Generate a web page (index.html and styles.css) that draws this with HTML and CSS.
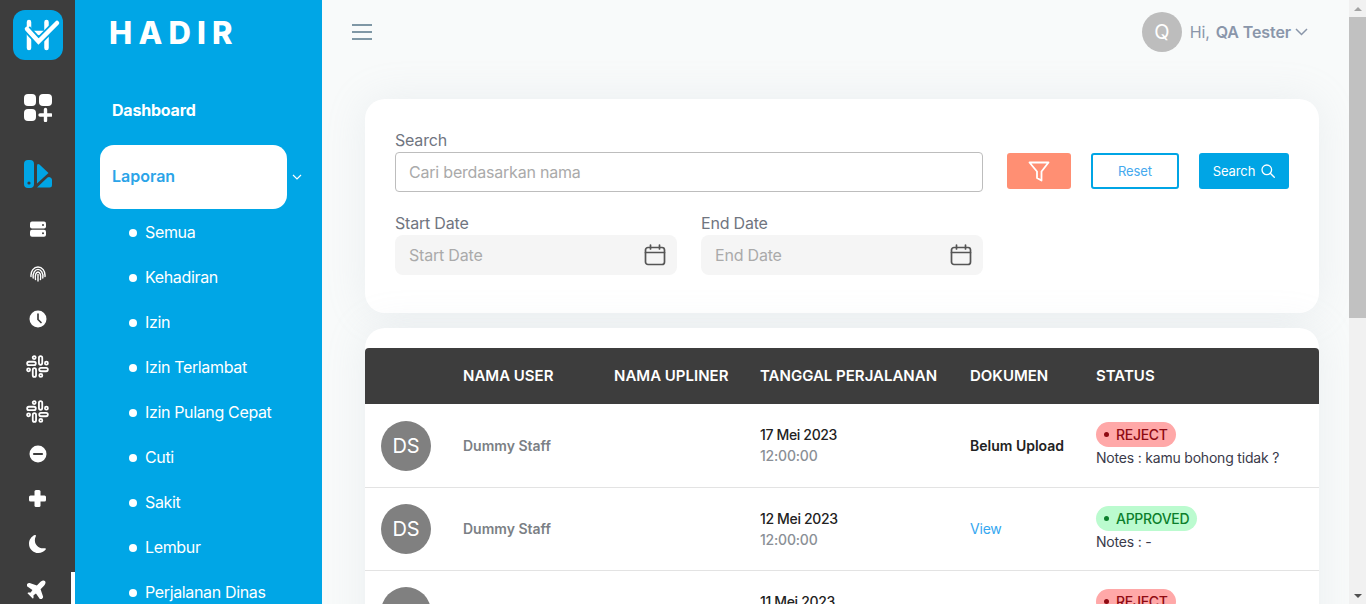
FILE: index.html
```html
<!DOCTYPE html>
<html lang="id">
<head>
    <meta charset="UTF-8">
    <meta name="viewport" content="width=device-width, initial-scale=1.0">
    <title>Hadir - Laporan Perjalanan Dinas</title>
    <link rel="stylesheet" href="styles.css">
</head>
<body>
    <svg class="defs" width="0" height="0">
        <symbol id="slack" viewBox="0 0 16 16">
            <g fill="none" stroke="#fff" stroke-width="1.250">
                <rect x="0.800" y="4.700" width="6" height="2.300" rx="1.150"/>
                <circle cx="5.700" cy="1.800" r="1.050"/>
                <rect x="9" y="0.800" width="2.300" height="6" rx="1.150"/>
                <circle cx="14.200" cy="5.700" r="1.050"/>
                <rect x="9.200" y="9" width="6" height="2.300" rx="1.150"/>
                <circle cx="10.300" cy="14.200" r="1.050"/>
                <rect x="4.700" y="9.200" width="2.300" height="6" rx="1.150"/>
                <circle cx="1.800" cy="10.300" r="1.050"/>
            </g>
        </symbol>
        <symbol id="calendar" viewBox="0 0 22 22">
            <g fill="none" stroke="#555" stroke-width="1.7" stroke-linecap="round">
                <rect x="1.500" y="3.500" width="19" height="17" rx="2.500"/>
                <path d="M1.500 8.500h19M6.500 1v4M15.500 1v4"/>
            </g>
        </symbol>
    </svg>

    <nav class="rail">
        <div class="rail-logo">
            <svg width="50" height="50" viewBox="0 0 50 50">
                <path d="M16 12v26M33.500 12v26M16 23h17.500" stroke="#fff" stroke-width="4.500" stroke-linecap="round" fill="none"/>
                <path d="M14 19l11.500 12.500L44 13" stroke="#00a5e5" stroke-width="8" fill="none"/>
                <path d="M14 19l11.500 12.500L44 13" stroke="#fff" stroke-width="4.500" stroke-linecap="round" fill="none"/>
            </svg>
        </div>
        <div class="rail-apps">
            <svg width="28" height="28" viewBox="0 0 28 28" fill="#fff">
                <rect x="0" y="0" width="12" height="12" rx="4"/>
                <rect x="15" y="0" width="13" height="12" rx="4"/>
                <rect x="0" y="15" width="12" height="12" rx="4"/>
                <path d="M21.500 15.500v11M16 21h11" stroke="#fff" stroke-width="3.400" stroke-linecap="round"/>
            </svg>
        </div>
        <div class="rail-brand">
            <svg width="28" height="28" viewBox="0 0 28 28">
                <rect x="0" y="0" width="10" height="28" rx="4" fill="#00a5e5"/>
                <circle cx="5" cy="23" r="1.600" fill="#3d3d3d"/>
                <path d="M13 6q0-3 2.500-1.500L24.500 13 13 23.500z" fill="#00a5e5"/>
                <path d="M13 27.500L23.500 17.500q1.500-1 3 0l.5.5q1 .7 1 2V25q0 2.500-2.500 2.500z" fill="#00a5e5"/>
            </svg>
        </div>
        <div class="rail-item">
            <svg width="16" height="16" viewBox="0 0 16 16" fill="#fff">
                <rect x="0" y="0.500" width="16" height="7" rx="2"/>
                <rect x="0" y="8.800" width="16" height="7" rx="2"/>
                <circle cx="13" cy="4" r="1" fill="#3d3d3d"/>
                <circle cx="13" cy="12.300" r="1" fill="#3d3d3d"/>
            </svg>
        </div>
        <div class="rail-item">
            <svg width="16" height="16" viewBox="0 0 16 16" fill="none" stroke="#fff" stroke-width="1.400" stroke-linecap="round">
                <path d="M1 10.500C.5 5 4 1 8 1s7.500 4 7 9.500"/>
                <path d="M3.200 12C2.500 7 5 3.400 8 3.400s5.500 3.600 4.800 8.600"/>
                <path d="M5.500 13.500C4.800 9 6 6 8 6s3.200 3 2.500 7.500"/>
                <path d="M8 8.500V15"/>
            </svg>
        </div>
        <div class="rail-item">
            <svg width="18" height="18" viewBox="0 0 18 18">
                <circle cx="9" cy="9" r="8.500" fill="#fff"/>
                <path d="M9 4v5.500l3 3" stroke="#3d3d3d" stroke-width="1.700" fill="none" stroke-linecap="round"/>
            </svg>
        </div>
        <div class="rail-item rail-item-low">
            <svg width="23" height="23"><use href="#slack"/></svg>
        </div>
        <div class="rail-item rail-item-low">
            <svg width="23" height="23"><use href="#slack"/></svg>
        </div>
        <div class="rail-item">
            <svg width="18" height="18" viewBox="0 0 18 18">
                <circle cx="9" cy="9" r="8.500" fill="#fff"/>
                <path d="M5 9h8" stroke="#3d3d3d" stroke-width="2.200" stroke-linecap="round"/>
            </svg>
        </div>
        <div class="rail-item">
            <svg width="17" height="17" viewBox="0 0 17 17" fill="#fff">
                <rect x="5.500" y="0" width="6" height="17" rx="1.500"/>
                <rect x="0" y="5.500" width="17" height="6" rx="1.500"/>
            </svg>
        </div>
        <div class="rail-item">
            <svg width="18" height="18" viewBox="0 0 16 16" fill="#fff">
                <path d="M6 .278a.768.768 0 0 1 .08.858 7.208 7.208 0 0 0-.878 3.460c0 4.021 3.278 7.277 7.318 7.277.527 0 1.040-.055 1.533-.16a.787.787 0 0 1 .81.316.733.733 0 0 1-.031.893A8.349 8.349 0 0 1 8.344 16C3.734 16 0 12.286 0 7.710 0 4.266 2.114 1.312 5.124.06A.752.752 0 0 1 6 .278z"/>
            </svg>
        </div>
        <div class="rail-item rail-item-active">
            <svg width="21" height="21" viewBox="0 0 16 16" fill="#fff">
                <path transform="rotate(45 8 8)" d="M6.428 1.151C6.708.591 7.213 0 8 0s1.292.592 1.572 1.151C9.861 1.730 10 2.431 10 3v3.691l5.170 2.585a1.500 1.500 0 0 1 .83 1.342V12a.5.5 0 0 1-.582.493l-5.507-.918-.375 2.253 1.318 1.318A.5.5 0 0 1 10.500 16h-5a.5.5 0 0 1-.354-.854l1.319-1.318-.376-2.253-5.507.918A.5.5 0 0 1 0 12v-1.382a1.500 1.500 0 0 1 .83-1.342L6 6.691V3c0-.568.14-1.271.428-1.849Z"/>
            </svg>
        </div>
    </nav>

    <aside class="sidebar">
        <div class="brand">HADIR</div>
        <a class="menu-link">Dashboard</a>
        <div class="menu-group">
            <a class="menu-pill">Laporan</a>
            <svg class="menu-chevron" width="10" height="6" viewBox="0 0 10 6">
                <path d="M1 1l4 4 4-4" fill="none" stroke="#fff" stroke-width="1.200"/>
            </svg>
        </div>
        <ul class="submenu">
            <li>Semua</li>
            <li>Kehadiran</li>
            <li>Izin</li>
            <li>Izin Terlambat</li>
            <li>Izin Pulang Cepat</li>
            <li>Cuti</li>
            <li>Sakit</li>
            <li>Lembur</li>
            <li>Perjalanan Dinas</li>
        </ul>
    </aside>

    <main class="main">
        <header class="topbar">
            <button class="hamburger" type="button" aria-label="Menu"><span></span><span></span><span></span></button>
            <div class="user">
                <div class="user-avatar">Q</div>
                <span class="user-hi">Hi,</span>
                <span class="user-name">QA Tester</span>
                <svg width="13" height="8" viewBox="0 0 13 8">
                    <path d="M1 1l5.500 5.500L12 1" fill="none" stroke="#8a96aa" stroke-width="1.500"/>
                </svg>
            </div>
        </header>

        <section class="card filter-card">
            <div class="filter-row">
                <div class="field field-search">
                    <label for="search">Search</label>
                    <input type="text" id="search" class="input" placeholder="Cari berdasarkan nama">
                </div>
                <div class="filter-actions">
                    <button class="btn btn-filter" type="button" aria-label="Filter">
                        <svg width="22" height="21" viewBox="0 0 22 21">
                            <path d="M1.500 1.500h19L13.500 10.500v9l-4.500-2.500v-6.500z" fill="none" stroke="#fff" stroke-width="1.800" stroke-linejoin="round"/>
                        </svg>
                    </button>
                    <button class="btn btn-reset" type="button">Reset</button>
                    <button class="btn btn-search" type="button">Search
                        <svg width="14" height="14" viewBox="0 0 14 14">
                            <circle cx="5.800" cy="5.800" r="4.800" fill="none" stroke="#fff" stroke-width="1.300"/>
                            <path d="M9.300 9.300l4 4" stroke="#fff" stroke-width="1.300" stroke-linecap="round"/>
                        </svg>
                    </button>
                </div>
            </div>
            <div class="date-row">
                <div class="field field-date">
                    <label for="start">Start Date</label>
                    <div class="date-input">
                        <input type="text" id="start" placeholder="Start Date">
                        <svg width="22" height="22"><use href="#calendar"/></svg>
                    </div>
                </div>
                <div class="field field-date">
                    <label for="end">End Date</label>
                    <div class="date-input">
                        <input type="text" id="end" placeholder="End Date">
                        <svg width="22" height="22"><use href="#calendar"/></svg>
                    </div>
                </div>
            </div>
        </section>

        <section class="card table-card">
            <table class="report-table">
                <colgroup>
                    <col class="col-avatar"><col class="col-user"><col class="col-upliner">
                    <col class="col-date"><col class="col-doc"><col class="col-status">
                </colgroup>
                <thead>
                    <tr>
                        <th></th>
                        <th>NAMA USER</th>
                        <th>NAMA UPLINER</th>
                        <th>TANGGAL PERJALANAN</th>
                        <th>DOKUMEN</th>
                        <th>STATUS</th>
                    </tr>
                </thead>
                <tbody>
                    <tr>
                        <td><div class="avatar">DS</div></td>
                        <td class="cell-user">Dummy Staff</td>
                        <td></td>
                        <td><div class="date">17 Mei 2023</div><div class="time">12:00:00</div></td>
                        <td class="cell-doc">Belum Upload</td>
                        <td>
                            <span class="badge badge-reject">REJECT</span>
                            <div class="notes">Notes : kamu bohong tidak ?</div>
                        </td>
                    </tr>
                    <tr>
                        <td><div class="avatar">DS</div></td>
                        <td class="cell-user">Dummy Staff</td>
                        <td></td>
                        <td><div class="date">12 Mei 2023</div><div class="time">12:00:00</div></td>
                        <td class="cell-view">View</td>
                        <td>
                            <span class="badge badge-approved">APPROVED</span>
                            <div class="notes">Notes : -</div>
                        </td>
                    </tr>
                    <tr>
                        <td><div class="avatar">DS</div></td>
                        <td class="cell-user">Dummy Staff</td>
                        <td></td>
                        <td><div class="date">11 Mei 2023</div><div class="time">12:00:00</div></td>
                        <td class="cell-doc">Belum Upload</td>
                        <td>
                            <span class="badge badge-reject">REJECT</span>
                            <div class="notes">Notes : -</div>
                        </td>
                    </tr>
                </tbody>
            </table>
        </section>
    </main>

    <div class="scrollbar">
        <div class="scroll-up"></div>
        <div class="scroll-thumb"></div>
        <div class="scroll-track"></div>
        <div class="scroll-down"></div>
    </div>
</body>
</html>
```

FILE: styles.css
```css
* {
    box-sizing: border-box;
}

html, body {
    height: 604px;
    overflow: hidden;
}

body {
    margin: 0;
    display: flex;
    font-family: Inter, "Liberation Sans", sans-serif;
    font-size: 16px;
    letter-spacing: -0.2px;
    color: #333;
    background-color: #f8fafa;
}

.defs {
    position: absolute;
}

/* icon rail */
.rail {
    flex: 0 0 75px;
    height: 604px;
    background-color: #3d3d3d;
    overflow: hidden;
}

.rail-logo {
    width: 50px;
    height: 50px;
    margin: 10px 0 0 13px;
    background-color: #00a5e5;
    border-radius: 12px;
}

.rail-apps {
    display: flex;
    justify-content: center;
    margin-top: 34px;
    height: 28px;
}

.rail-brand {
    display: flex;
    justify-content: center;
    margin-top: 38px;
    height: 28px;
    margin-bottom: 18px;
}

.rail-item {
    position: relative;
    display: flex;
    align-items: center;
    justify-content: center;
    height: 45px;
}

.rail-item-low {
    padding-top: 6px;
}

.rail-item-active::after {
    content: "";
    position: absolute;
    right: 0;
    top: 6px;
    bottom: 0;
    width: 4px;
    background-color: #fff;
}

/* blue menu */
.sidebar {
    flex: 0 0 247px;
    height: 604px;
    padding: 0 0 0 25px;
    background-color: #00a6e6;
    color: #fff;
    overflow: hidden;
}

.brand {
    margin: 14px 0 0 9px;
    height: 38px;
    font-size: 31px;
    line-height: 38px;
    font-weight: 800;
    letter-spacing: 6.200px;
}

.menu-link {
    display: block;
    margin: 47px 0 0 12px;
    height: 22px;
    line-height: 22px;
    font-weight: 700;
}

.menu-group {
    display: flex;
    align-items: center;
    margin-top: 24px;
}

.menu-pill {
    display: block;
    flex: 0 0 187px;
    height: 64px;
    padding-left: 12px;
    line-height: 63px;
    font-weight: 600;
    letter-spacing: 0;
    color: #2ba4e8;
    background-color: #fff;
    border-radius: 14px;
}

.menu-chevron {
    flex: none;
    margin-left: 5px;
}

.submenu {
    list-style: none;
    margin: 0;
    padding: 1px 0 0 45px;
}

.submenu li {
    position: relative;
    height: 45px;
    line-height: 45px;
    letter-spacing: -0.35px;
    white-space: nowrap;
}

.submenu li::before {
    content: "";
    position: absolute;
    left: -16px;
    top: 19px;
    width: 8px;
    height: 8px;
    background-color: #fff;
    border-radius: 50%;
}

/* main area */
.main {
    flex: 1;
    height: 604px;
    padding: 0 30px 0 43px;
    overflow: hidden;
}

.topbar {
    display: flex;
    align-items: center;
    justify-content: space-between;
    height: 64px;
    margin-bottom: 35px;
    margin-left: -13px;
}

.hamburger {
    display: flex;
    flex-direction: column;
    gap: 5px;
    width: 20px;
    padding: 0;
    border: none;
    background: none;
}

.hamburger span {
    display: block;
    height: 2px;
    background-color: #7f97a5;
}

.user {
    display: flex;
    align-items: center;
    margin-right: 11px;
    color: #8a96aa;
}

.user-avatar {
    width: 40px;
    height: 40px;
    margin-right: 8px;
    font-size: 20px;
    line-height: 40px;
    text-align: center;
    color: #fff;
    background-color: #bdbdbd;
    border-radius: 50%;
}

.user-hi {
    margin-right: 6px;
}

.user-name {
    margin-right: 4px;
    font-weight: 600;
    letter-spacing: -0.1px;
}

.card {
    background-color: #fff;
    border-radius: 20px;
    box-shadow: 0 0 40px rgba(170, 180, 195, 0.16);
}

.filter-card {
    height: 214px;
    padding: 30px;
    margin-bottom: 15px;
}

.filter-row {
    display: flex;
    align-items: flex-start;
    gap: 24px;
}

.field label {
    display: block;
    height: 23px;
    line-height: 23px;
    color: #70757f;
}

.field-search {
    flex: 0 0 588px;
}

.input {
    width: 100%;
    height: 40px;
    padding: 0 13px;
    font: inherit;
    letter-spacing: inherit;
    border: 1px solid #bdbdbd;
    border-radius: 4px;
}

input::placeholder {
    color: #aaa;
    opacity: 1;
}

.filter-actions {
    display: flex;
    gap: 20px;
    margin-top: 24px;
}

.btn {
    display: flex;
    align-items: center;
    justify-content: center;
    gap: 6px;
    height: 36px;
    padding: 0;
    font-family: inherit;
    font-size: 13px;
    letter-spacing: -0.1px;
    border: none;
    border-radius: 3px;
}

.btn-filter {
    width: 64px;
    background-color: #ff8f73;
}

.btn-reset {
    width: 88px;
    color: #45a9ee;
    background-color: #fff;
    border: 2px solid #00a5e5;
}

.btn-search {
    width: 90px;
    color: #fff;
    background-color: #00a5e5;
}

.date-row {
    display: flex;
    gap: 24px;
    margin-top: 20px;
}

.field-date {
    flex: 0 0 282px;
    min-width: 0;
}

.date-input {
    display: flex;
    align-items: center;
    height: 40px;
    padding: 0 11px 0 14px;
    background-color: #f5f5f5;
    border-radius: 8px;
}

.date-input input {
    flex: 1;
    width: 100%;
    min-width: 0;
    padding: 0;
    font: inherit;
    letter-spacing: inherit;
    border: none;
    outline: none;
    background: none;
}

/* table */
.table-card {
    padding-top: 20px;
    height: 400px;
}

.report-table {
    width: 100%;
    table-layout: fixed;
    border-collapse: collapse;
}

.col-avatar { width: 84px; }
.col-user { width: 151px; }
.col-upliner { width: 146px; }
.col-date { width: 210px; }
.col-doc { width: 126px; }

.report-table th {
    height: 56px;
    padding: 0 14px 2px;
    text-align: left;
    font-size: 15px;
    font-weight: 600;
    letter-spacing: 0;
    color: #fff;
    background-color: #3d3d3d;
    white-space: nowrap;
}

.report-table th:first-child {
    border-top-left-radius: 4px;
}

.report-table th:last-child {
    border-top-right-radius: 4px;
}

.report-table td {
    height: 83px;
    padding: 0 14px;
    font-size: 14px;
    letter-spacing: -0.2px;
    border-bottom: 1px solid #e3e3e3;
}

.report-table td:first-child {
    padding-left: 16px;
}

.report-table tbody tr:first-child td:first-child {
    padding-top: 2px;
}

.avatar {
    width: 50px;
    height: 50px;
    font-size: 20px;
    line-height: 50px;
    text-align: center;
    color: #fff;
    background-color: #808080;
    border-radius: 50%;
}

.report-table .cell-user {
    font-weight: 600;
    letter-spacing: 0;
    color: #7b7f85;
}

.date {
    font-weight: 500;
    letter-spacing: -0.35px;
    color: #222;
    line-height: 21px;
}

.time {
    font-weight: 500;
    color: #8a8f96;
    line-height: 21px;
}

.report-table .cell-doc {
    font-weight: 600;
    letter-spacing: 0;
    color: #222;
}

.cell-view {
    color: #35a7f0;
}

.badge {
    display: inline-flex;
    align-items: center;
    gap: 7px;
    height: 25px;
    padding: 0 8px;
    font-size: 14px;
    font-weight: 500;
    letter-spacing: -0.3px;
    border-radius: 13px;
}

.badge::before {
    content: "";
    width: 5px;
    height: 5px;
    background-color: currentColor;
    border-radius: 50%;
}

.badge-reject {
    color: #8f0a12;
    background-color: #ffa8a8;
}

.badge-approved {
    color: #0c7f2c;
    background-color: #bbfbcf;
}

.notes {
    margin-top: 1px;
    line-height: 20px;
    color: #3a3a4a;
    white-space: nowrap;
}

/* page scrollbar */
.scrollbar {
    display: flex;
    flex-direction: column;
    flex: 0 0 17px;
    height: 604px;
    background-color: #f1f1f1;
}

.scroll-up,
.scroll-down {
    display: flex;
    align-items: center;
    justify-content: center;
    height: 17px;
}

.scroll-up::before {
    content: "";
    border: 4px solid transparent;
    border-top: 0;
    border-bottom: 4px solid #a3a3a3;
}

.scroll-down::before {
    content: "";
    border: 4px solid transparent;
    border-bottom: 0;
    border-top: 4px solid #505050;
}

.scroll-thumb {
    height: 301px;
    background-color: #c1c1c1;
}

.scroll-track {
    flex: 1;
}
```
